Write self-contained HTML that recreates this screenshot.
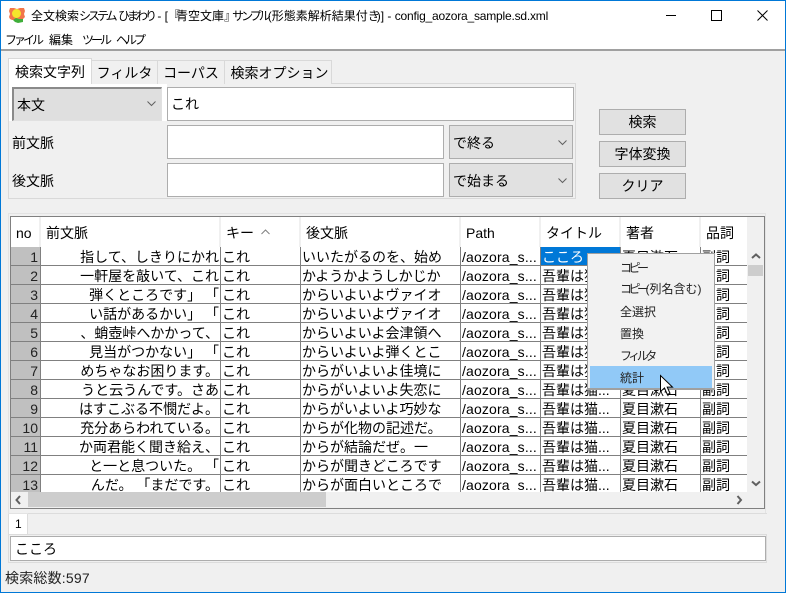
<!DOCTYPE html>
<html><head><meta charset="utf-8">
<style>
html,body{margin:0;padding:0}
body{width:786px;height:593px;position:relative;overflow:hidden;background:#f0f0f0;font-family:"Liberation Sans","Noto Sans CJK JP",sans-serif;font-size:14px;color:#000;text-spacing-trim:space-all;font-feature-settings:"palt" 0}
div{position:absolute;box-sizing:border-box;white-space:nowrap}
.t{line-height:20px;height:20px}
.k{letter-spacing:-3px}
.kk{letter-spacing:-4px}
.tab{top:60px;height:24px;background:#f0f0f0;border:1px solid #d9d9d9;border-bottom:0;line-height:25px;text-align:center}
.in{background:#fff;border:1px solid #adadad;line-height:32px;padding-left:3px}
.cb{background:#e1e1e1;border:1px solid #adadad;line-height:34px;padding-left:3px}
.btn{background:#e1e1e1;border:1px solid #adadad;left:599px;width:87px;height:26px;text-align:center;line-height:24px}
svg{position:absolute;overflow:visible}
.h{top:217px;height:30px;background:#fff;line-height:32px;padding-left:5px;border-right:2px solid #f0f0f0}
.r{left:11px;width:736px;height:19px;border-bottom:1px solid #808080;line-height:19px;background:#fff}
.c{top:0;height:18px;line-height:21px;overflow:hidden;border-right:1px solid #808080;padding-left:1px}
.no{left:0;width:30px;background:#c0c0c0;text-align:right;padding-right:2px;border-right:1px solid #808080;color:#222}
.pre{left:30px;width:180px;text-align:right;padding:0 1px 0 0}
.key{left:210px;width:80px}.post{left:290px;width:160px}.path{left:450px;width:80px;padding-left:1px;letter-spacing:.15px}.ttl{left:530px;width:80px}.au{left:610px;width:80px}.pos{left:690px;width:46px;border-right:0}
.mi{left:620px;font-size:12px;line-height:16px;height:16px;color:#222}
.m{top:30px;font-size:12px;line-height:20px;height:20px;letter-spacing:-3px}
</style></head><body>
<div style="left:0;top:0;width:786px;height:593px;border:1px solid #0078d7;z-index:20;pointer-events:none"></div>
<div style="left:1px;top:1px;width:784px;height:50px;background:#fff;border-bottom:2px solid #a0a0a0"></div>
<svg style="left:9px;top:7px" width="16" height="16" viewBox="0 0 16 16"><path d="M1 1h4l3 1 3-1h4l1 3-1 3 1 3-2 2-1 1H3l-2-1-1-2 1-3-1-3z" fill="#f2764a"/><circle cx="7.500" cy="6.500" r="4.500" fill="#f5e52c"/><path d="M4 13l3-2 3 1 4 0 0 3-5 1-3-1z" fill="#3fae3a"/></svg>
<div class="t" style="left:31px;top:6px;font-size:12px">全文検索<span class="k">システム</span> <span class="k">ひまわり</span> - [<span class="kk">『</span>青空文庫<span class="kk">』</span><span class="k">サンプル</span>(形態素解析結果付<span class="k">き</span>)] - <span style="letter-spacing:-.2px">config_aozora_sample.sd.xml</span></div>
<svg style="left:666px;top:10px" width="110" height="12"><path d="M0 5.500h10" stroke="#000"/><rect x="45.500" y="0.500" width="10" height="10" fill="none" stroke="#000"/><path d="M91.500 0.500l10 10M101.500 0.500l-10 10" stroke="#000"/></svg>
<div class="m" style="left:5px">ファイル</div>
<div class="m" style="left:49px;letter-spacing:0">編集</div>
<div class="m" style="left:82px">ツール</div>
<div class="m" style="left:116px">ヘルプ</div>

<div style="left:8px;top:83px;width:568px;height:116px;border:1px solid #d9d9d9"></div>
<div class="tab" style="left:91px;width:67px">フィルタ</div>
<div class="tab" style="left:157px;width:68px">コーパス</div>
<div class="tab" style="left:224px;width:108px;padding-left:3px">検索オプション</div>
<div class="tab" style="left:8px;top:58px;width:84px;height:26px;background:#fff;line-height:27px">検索文字列</div>
<div style="left:9px;top:84px;width:158px;height:37px;background:#fff"></div>
<div class="cb" style="left:12px;top:87px;width:150px;height:34px;border:2px solid #8a8a8a;border-right:1px solid #e1e1e1;border-bottom:1px solid #e1e1e1;background:#dfdfdf;line-height:33px;padding-left:3px">本文</div>
<svg style="left:147px;top:101px" width="10" height="6"><path d="M.5 .5l4 4 4-4" fill="none" stroke="#606060"/></svg>
<div class="in" style="left:167px;top:87px;width:407px;height:34px;line-height:32px">これ</div>
<div class="t" style="left:12px;top:133px">前文脈</div>
<div class="t" style="left:12px;top:171px">後文脈</div>
<div class="in" style="left:167px;top:125px;width:277px;height:34px"></div>
<div class="in" style="left:167px;top:163px;width:277px;height:34px"></div>
<div class="cb" style="left:449px;top:125px;width:124px;height:34px">で終る</div>
<div class="cb" style="left:449px;top:163px;width:124px;height:34px">で始まる</div>
<svg style="left:558px;top:140px" width="10" height="6"><path d="M.5 .5l4 4 4-4" fill="none" stroke="#606060"/></svg>
<svg style="left:558px;top:178px" width="10" height="6"><path d="M.5 .5l4 4 4-4" fill="none" stroke="#606060"/></svg>
<div class="btn" style="top:109px">検索</div>
<div class="btn" style="top:141px">字体変換</div>
<div class="btn" style="top:173px">クリア</div>

<div style="left:8px;top:213px;width:758px;height:301px;border:1px solid #e3e3e3"></div>
<div style="left:10px;top:216px;width:755px;height:293px;border:1px solid #808080;background:#f0f0f0"></div>
<div class="h" style="left:11px;width:30px;padding-left:5px">no</div>
<div class="h" style="left:41px;width:180px">前文脈</div>
<div class="h" style="left:221px;width:80px;padding-left:5px">キー</div>
<svg style="left:261px;top:229px" width="10" height="6"><path d="M.5 5l4-4 4 4" fill="none" stroke="#808080"/></svg>
<div class="h" style="left:301px;width:160px">後文脈</div>
<div class="h" style="left:461px;width:80px">Path</div>
<div class="h" style="left:541px;width:80px">タイトル</div>
<div class="h" style="left:621px;width:80px">著者</div>
<div class="h" style="left:701px;width:46px;border-right:0">品詞</div>

<div style="left:0;top:0;width:786px;height:492px;overflow:hidden">
<div class="r" style="top:247px"><div class="c no">1</div><div class="c pre">指して、しきりにかれ</div><div class="c key">これ</div><div class="c post">いいたがるのを、始め</div><div class="c path">/aozora_s...</div><div class="c ttl" style="background:#0078d7;color:#fff">こころ</div><div class="c au">夏目漱石</div><div class="c pos">副詞</div></div>
<div class="r" style="top:266px"><div class="c no">2</div><div class="c pre">一軒屋を敲いて、これ</div><div class="c key">これ</div><div class="c post">かようかようしかじか</div><div class="c path">/aozora_s...</div><div class="c ttl">吾輩は猫...</div><div class="c au">夏目漱石</div><div class="c pos">副詞</div></div>
<div class="r" style="top:285px"><div class="c no">3</div><div class="c pre">弾くところです」&nbsp;「</div><div class="c key">これ</div><div class="c post">からいよいよヴァイオ</div><div class="c path">/aozora_s...</div><div class="c ttl">吾輩は猫...</div><div class="c au">夏目漱石</div><div class="c pos">副詞</div></div>
<div class="r" style="top:304px"><div class="c no">4</div><div class="c pre">い話があるかい」&nbsp;「</div><div class="c key">これ</div><div class="c post">からいよいよヴァイオ</div><div class="c path">/aozora_s...</div><div class="c ttl">吾輩は猫...</div><div class="c au">夏目漱石</div><div class="c pos">副詞</div></div>
<div class="r" style="top:323px"><div class="c no">5</div><div class="c pre">、蛸壺峠へかかって、</div><div class="c key">これ</div><div class="c post">からいよいよ会津領へ</div><div class="c path">/aozora_s...</div><div class="c ttl">吾輩は猫...</div><div class="c au">夏目漱石</div><div class="c pos">副詞</div></div>
<div class="r" style="top:342px"><div class="c no">6</div><div class="c pre">見当がつかない」&nbsp;「</div><div class="c key">これ</div><div class="c post">からいよいよ弾くとこ</div><div class="c path">/aozora_s...</div><div class="c ttl">吾輩は猫...</div><div class="c au">夏目漱石</div><div class="c pos">副詞</div></div>
<div class="r" style="top:361px"><div class="c no">7</div><div class="c pre">めちゃなお困ります。</div><div class="c key">これ</div><div class="c post">からがいよいよ佳境に</div><div class="c path">/aozora_s...</div><div class="c ttl">吾輩は猫...</div><div class="c au">夏目漱石</div><div class="c pos">副詞</div></div>
<div class="r" style="top:380px"><div class="c no">8</div><div class="c pre">うと云うんです。さあ</div><div class="c key">これ</div><div class="c post">からがいよいよ失恋に</div><div class="c path">/aozora_s...</div><div class="c ttl">吾輩は猫...</div><div class="c au">夏目漱石</div><div class="c pos">副詞</div></div>
<div class="r" style="top:399px"><div class="c no">9</div><div class="c pre">はすこぶる不憫だよ。</div><div class="c key">これ</div><div class="c post">からがいよいよ巧妙な</div><div class="c path">/aozora_s...</div><div class="c ttl">吾輩は猫...</div><div class="c au">夏目漱石</div><div class="c pos">副詞</div></div>
<div class="r" style="top:418px"><div class="c no">10</div><div class="c pre">充分あらわれている。</div><div class="c key">これ</div><div class="c post">からが化物の記述だ。</div><div class="c path">/aozora_s...</div><div class="c ttl">吾輩は猫...</div><div class="c au">夏目漱石</div><div class="c pos">副詞</div></div>
<div class="r" style="top:437px"><div class="c no">11</div><div class="c pre">か両君能く聞き給え、</div><div class="c key">これ</div><div class="c post">からが結論だぜ。一</div><div class="c path">/aozora_s...</div><div class="c ttl">吾輩は猫...</div><div class="c au">夏目漱石</div><div class="c pos">副詞</div></div>
<div class="r" style="top:456px"><div class="c no">12</div><div class="c pre">と一と息ついた。&nbsp;「</div><div class="c key">これ</div><div class="c post">からが聞きどころです</div><div class="c path">/aozora_s...</div><div class="c ttl">吾輩は猫...</div><div class="c au">夏目漱石</div><div class="c pos">副詞</div></div>
<div class="r" style="top:475px"><div class="c no">13</div><div class="c pre">んだ。&nbsp;「まだです。</div><div class="c key">これ</div><div class="c post">からが面白いところで</div><div class="c path">/aozora_s...</div><div class="c ttl">吾輩は猫...</div><div class="c au">夏目漱石</div><div class="c pos">副詞</div></div>
</div>

<div style="left:748px;top:265px;width:15px;height:11px;background:#cdcdcd"></div>
<svg style="left:751px;top:253px" width="10" height="7"><path d="M1 5l4-3.500 4 3.500" fill="none" stroke="#606060" stroke-width="2"/></svg>
<svg style="left:751px;top:480px" width="10" height="7"><path d="M1 1.500l4 3.500 4-3.500" fill="none" stroke="#606060" stroke-width="2"/></svg>
<div style="left:28px;top:492px;width:298px;height:15px;background:#cdcdcd"></div>
<svg style="left:15px;top:495px" width="7" height="10"><path d="M5 1L1.500 5 5 9" fill="none" stroke="#606060" stroke-width="2"/></svg>
<svg style="left:736px;top:495px" width="7" height="10"><path d="M1.500 1L5 5 1.500 9" fill="none" stroke="#606060" stroke-width="2"/></svg>

<div style="left:587px;top:253px;width:128px;height:137px;background:#f2f2f2;border:1px solid #a0a0a0;border-bottom-width:2px"></div>
<div style="left:590px;top:366px;width:122px;height:22px;background:#91c9f7"></div>
<div class="mi" style="top:260px"><span class="k" style="letter-spacing:-3.500px">コピー</span></div>
<div class="mi" style="top:281px"><span class="k" style="letter-spacing:-3.500px">コピー</span>(列名含む)</div>
<div class="mi" style="top:304px">全選択</div>
<div class="mi" style="top:326px">置換</div>
<div class="mi" style="top:348px"><span class="k" style="letter-spacing:-3.500px">フィルタ</span></div>
<div class="mi" style="top:370px">統計</div>
<svg style="left:660px;top:375px" width="14" height="21"><path d="M.5 .5v16l4-3.500 2.800 6.500 2.700-1.200-2.800-6.200h5.300z" fill="#fff" stroke="#000"/></svg>

<div style="left:28px;top:513px;width:739px;height:1px;background:#dcdcdc"></div>
<div style="left:8px;top:514px;width:20px;height:20px;background:#fff;border-right:1px solid #dcdcdc;border-left:1px solid #dcdcdc;font-size:12px;line-height:21px;padding-left:6px">1</div>
<div style="left:8px;top:534px;width:759px;height:29px;border:1px solid #dcdcdc"></div>
<div class="in" style="left:10px;top:536px;width:756px;height:25px;line-height:25px;padding-left:4px">こころ</div>
<div class="t" style="left:5px;top:568px;color:#222;font-size:14px;letter-spacing:.2px">検索総数:597</div>
</body></html>
